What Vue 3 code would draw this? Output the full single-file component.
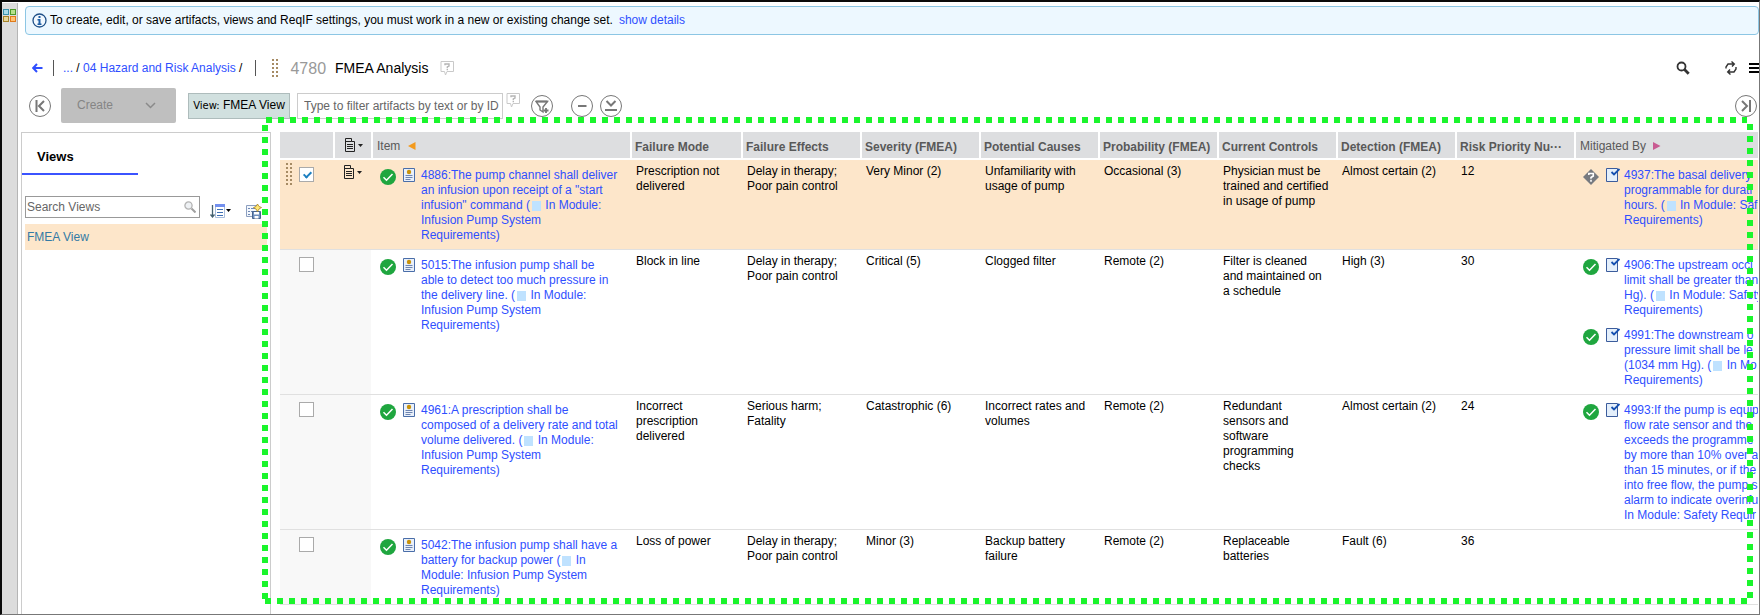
<script setup>
import { ref } from 'vue'

const filter = ref('')
const viewSearch = ref('')

const columns = [
  'Failure Mode',
  'Failure Effects',
  'Severity (FMEA)',
  'Potential Causes',
  'Probability (FMEA)',
  'Current Controls',
  'Detection (FMEA)',
  'Risk Priority Nu···',
]

// In link lines, "#" stands for the small module square.
const rows = ref([
  {
    id: 4886,
    selected: true,
    item: ['4886:The pump channel shall deliver', 'an infusion upon receipt of a "start', 'infusion" command (# In Module:', 'Infusion Pump System', 'Requirements)'],
    cells: ['Prescription not\ndelivered', 'Delay in therapy;\nPoor pain control', 'Very Minor (2)', 'Unfamiliarity with\nusage of pump', 'Occasional (3)', 'Physician must be\ntrained and certified\nin usage of pump', 'Almost certain (2)', '12'],
    links: [{ state: 'unknown', lines: ['4937:The basal delivery', 'programmable for durati', 'hours. (# In Module: Saf', 'Requirements)'] }],
  },
  {
    id: 5015,
    selected: false,
    item: ['5015:The infusion pump shall be', 'able to detect too much pressure in', 'the delivery line. (# In Module:', 'Infusion Pump System', 'Requirements)'],
    cells: ['Block in line', 'Delay in therapy;\nPoor pain control', 'Critical (5)', 'Clogged filter', 'Remote (2)', 'Filter is cleaned\nand maintained on\na schedule', 'High (3)', '30'],
    links: [
      { state: 'ok', lines: ['4906:The upstream occl', 'limit shall be greater than', 'Hg). (# In Module: Safety', 'Requirements)'] },
      { state: 'ok', lines: ['4991:The downstream o', 'pressure limit shall be le', '(1034 mm Hg). (# In Mo', 'Requirements)'] },
    ],
  },
  {
    id: 4961,
    selected: false,
    item: ['4961:A prescription shall be', 'composed of a delivery rate and total', 'volume delivered. (# In Module:', 'Infusion Pump System', 'Requirements)'],
    cells: ['Incorrect\nprescription\ndelivered', 'Serious harm;\nFatality', 'Catastrophic (6)', 'Incorrect rates and\nvolumes', 'Remote (2)', 'Redundant\nsensors and\nsoftware\nprogramming\nchecks', 'Almost certain (2)', '24'],
    links: [{ state: 'ok', lines: ['4993:If the pump is equip', 'flow rate sensor and the', 'exceeds the programme', 'by more than 10% over a', 'than 15 minutes, or if the', 'into free flow, the pump s', 'alarm to indicate overinfu', 'In Module: Safety Requir'] }],
  },
  {
    id: 5042,
    selected: false,
    item: ['5042:The infusion pump shall have a', 'battery for backup power (# In', 'Module: Infusion Pump System', 'Requirements)'],
    cells: ['Loss of power', 'Delay in therapy;\nPoor pain control', 'Minor (3)', 'Backup battery\nfailure', 'Remote (2)', 'Replaceable\nbatteries', 'Fault (6)', '36'],
    links: [],
  },
])
</script>

<template>
  <div class="page">
    <nav class="rail" aria-label="Dashboards">
      <button class="plain" aria-label="Open dashboards">
        <svg width="13" height="13" viewBox="0 0 13 13">
          <rect x=".5" y=".5" width="5" height="5" fill="#a8dbe8" stroke="#3a93ad" />
          <rect x="7.500" y=".5" width="5" height="5" fill="#b5e08a" stroke="#4c9a2a" />
          <rect x=".5" y="7.500" width="5" height="5" fill="#e6d596" stroke="#a5832a" />
          <rect x="7.500" y="7.500" width="5" height="5" fill="#ffc173" stroke="#e07a1a" />
        </svg>
      </button>
    </nav>

    <main class="main">
      <div class="banner">
        <svg width="15" height="15" viewBox="0 0 15 15">
          <circle cx="7.500" cy="7.500" r="6.500" fill="#f2f9ff" stroke="#1f5088" stroke-width="1.300" />
          <path d="M6.500 3h2v2h-2zM5.500 6h3v4.500h1V12h-4v-1.500h1V7.500h-1z" fill="#1f5fa5" />
        </svg>
        <span class="banner-text">To create, edit, or save artifacts, views and ReqIF settings, you must work in a new or existing change set.</span>
        <a href="#">show details</a>
      </div>

      <header class="crumbs">
        <a href="#" class="back" aria-label="Back">
          <svg width="11" height="10" viewBox="0 0 11 10"><path d="M10.500 5H1.500M5 1 1.200 5 5 9" fill="none" stroke="#2f4fff" stroke-width="2" /></svg>
        </a>
        <i class="bar"></i>
        <span class="trail"><a href="#">...</a> / <a href="#">04 Hazard and Risk Analysis</a> /</span>
        <i class="bar bar-end"></i>
        <svg class="grip" width="6" height="18" viewBox="0 0 6 18"><path d="M1 0v18M5 0v18" stroke="#a68b64" stroke-width="2" stroke-dasharray="2 2" /></svg>
        <span class="module-id">4780</span>
        <h1>FMEA Analysis</h1>
        <button class="plain" aria-label="Help">
          <svg width="15" height="15" viewBox="0 0 15 15"><path d="M1 .5h12.500v10H7L5.500 14 4.500 10.500H1z" fill="#fff" stroke="#c9c9c9" /><path d="M5 4.200V3h4v2L7.300 6v1.200M7.300 8v1.300" fill="none" stroke="#b5b5b5" stroke-width="1.400" /></svg>
        </button>
        <div class="tools">
          <button class="plain" aria-label="Search">
            <svg width="14" height="14" viewBox="0 0 14 14"><circle cx="5.500" cy="5.500" r="4" fill="none" stroke="#333" stroke-width="1.800" /><path d="m8.500 8.500 4.200 4.200" stroke="#333" stroke-width="2.800" /></svg>
          </button>
          <button class="plain refresh" aria-label="Refresh">
            <svg width="12" height="14" viewBox="0 0 12 14"><path d="M1 7.500V6l2-3h6M6.500.5 9.300 3 7 5.500M11 6v2l-2 3H3M5.500 13.500 2.700 11 5 8.500" fill="none" stroke="#333" stroke-width="1.400" /></svg>
          </button>
          <button class="plain" aria-label="Menu">
            <svg width="10" height="10" viewBox="0 0 10 10"><path d="M0 1h10M0 5h10M0 9h10" stroke="#000" stroke-width="2" /></svg>
          </button>
        </div>
      </header>

      <div class="toolbar">
        <button class="round" aria-label="Collapse left panel">
          <svg width="22" height="22" viewBox="0 0 22 22"><path d="M7.500 5v12M15 6l-5 5 5 5" fill="none" stroke="#777" stroke-width="2" /></svg>
        </button>
        <button class="create" disabled>Create
          <svg width="11" height="7" viewBox="0 0 11 7"><path d="m1 1 4.500 4.500L10 1" fill="none" stroke="#8a8a8a" stroke-width="1.500" /></svg>
        </button>
        <button class="view-pick"><small>View:</small> FMEA View</button>
        <input v-model="filter" class="filter" type="text" aria-label="Filter artifacts" placeholder="Type to filter artifacts by text or by ID" />
        <button class="plain help" aria-label="Filter help">
          <svg width="15" height="15" viewBox="0 0 15 15"><path d="M1 .5h12.500v10H7L5.500 14 4.500 10.500H1z" fill="#fff" stroke="#c9c9c9" /><path d="M5 4.200V3h4v2L7.300 6v1.200M7.300 8v1.300" fill="none" stroke="#b5b5b5" stroke-width="1.400" /></svg>
        </button>
        <button class="round add-filter" aria-label="Add filter">
          <svg width="22" height="22" viewBox="0 0 22 22"><path d="M5 6.500h11.500L12 12v5L9 15v-3z" fill="none" stroke="#777" stroke-width="1.400" /><path d="M5 6.500h11.500" stroke="#777" stroke-width="2" /><path d="M15 13v5M12.500 15.500h5" stroke="#777" stroke-width="1.800" /></svg>
        </button>
        <button class="round" aria-label="Collapse all">
          <svg width="22" height="22" viewBox="0 0 22 22"><path d="M7 11h8.500" stroke="#777" stroke-width="2" /></svg>
        </button>
        <button class="round expand" aria-label="Expand all">
          <svg width="22" height="22" viewBox="0 0 22 22"><path d="m6.500 6 4.500 4.500L15.500 6M5 15h12" fill="none" stroke="#777" stroke-width="2" /></svg>
        </button>
        <button class="round right" aria-label="Expand right panel">
          <svg width="22" height="22" viewBox="0 0 22 22"><path d="M15 5v12M7 6l5 5-5 5" fill="none" stroke="#777" stroke-width="2" /></svg>
        </button>
      </div>

      <div class="content">
        <aside class="views">
          <h2>Views</h2>
          <div class="search-row">
            <label class="search">
              <input v-model="viewSearch" type="text" aria-label="Search Views" placeholder="Search Views" />
              <svg width="12" height="12" viewBox="0 0 12 12"><circle cx="4.500" cy="4.500" r="3.600" fill="#eef1f4" stroke="#b3b3b3" stroke-width="1.300" /><path d="m7.500 7.500 4 4" stroke="#a0a0a0" stroke-width="2" /></svg>
            </label>
            <button class="plain sort" aria-label="Sort views">
              <svg width="21" height="14" viewBox="0 0 21 14"><path d="M2.500 1v12M.5 10.500l2 2.500 2-2.500" fill="none" stroke="#44606f" stroke-width="1.300" /><path d="M5.500.5h9v13h-9z" fill="#fff" stroke="#a9bddc" /><path d="M5 0h10v3H5z" fill="#7390ee" /><path d="M7 5.500h6M7 8.500h6M7 11.500h6" stroke="#3e6fb5" /><path d="M16 5h5l-2.500 3z" fill="#000" /></svg>
            </button>
            <button class="plain save" aria-label="Save view">
              <svg width="16" height="15" viewBox="0 0 16 15"><path d="M.5 1.500h11v11H.5z" fill="#f3f7fc" stroke="#8c9fc0" /><path d="M2 4.500h2M2 7.500h2M2 10.500h2M5 4.500h4M5 7.500h3" stroke="#6f88b5" /><path d="M6.500 7.500h8v7h-8z" fill="#6e8fbd" stroke="#48658f" /><path d="M8 8h5v2.500H8zM8.500 12h4v2.500h-4z" fill="#fff" /><path d="M11.500 0 13 2.500l2.500 1L13 5l-1.500 2.500L10 5 7.500 3.500l2.500-1z" fill="#ffe873" stroke="#a8821e" stroke-width=".8" /></svg>
            </button>
          </div>
          <a href="#" class="view-item">FMEA View</a>
        </aside>

        <div class="grid">
          <table>
            <colgroup>
              <col class="c-check" /><col class="c-menu" /><col class="c-item" /><col class="c-mode" />
              <col v-for="n in 7" :key="n" class="c-attr" /><col />
            </colgroup>
            <thead>
              <tr>
                <th></th>
                <th>
                  <button class="plain page-menu" aria-label="Bulk actions">
                    <svg width="19" height="15" viewBox="0 0 19 15"><path d="M.5.5h6v3h3v10h-9zM.5 3.500h6M2 6.500h6M2 8.500h6M2 10.500h6" fill="none" stroke="#222" /><path d="M13 6h5l-2.500 3z" fill="#222" /></svg>
                  </button>
                </th>
                <th class="light">Item <svg width="8" height="8" viewBox="0 0 8 8"><path d="M7.500 0v8L0 4z" fill="#f39a1d" /></svg></th>
                <th v-for="c in columns" :key="c" class="attr">{{ c }}</th>
                <th class="light">Mitigated By <svg width="8" height="8" viewBox="0 0 8 8"><path d="M0 0v8l7.500-4z" fill="#c95b92" /></svg></th>
              </tr>
            </thead>
            <tbody>
              <tr v-for="r in rows" :key="r.id" :class="{ selected: r.selected }">
                <td class="side">
                  <div class="pick">
                    <svg class="handle" width="6" height="22" viewBox="0 0 6 22"><path v-if="r.selected" d="M1 0v22M5 0v22" stroke="#a68b64" stroke-width="2" stroke-dasharray="2 2" /></svg>
                    <input v-model="r.selected" type="checkbox" :aria-label="'Select ' + r.id" />
                  </div>
                </td>
                <td class="side menu">
                  <button v-if="r.selected" class="plain page-menu" aria-label="Row actions">
                    <svg width="19" height="15" viewBox="0 0 19 15"><path d="M.5.5h6v3h3v10h-9zM.5 3.500h6M2 6.500h6M2 8.500h6M2 10.500h6" fill="none" stroke="#222" /><path d="M13 6h5l-2.500 3z" fill="#222" /></svg>
                  </button>
                </td>
                <td class="artifact-cell">
                  <div class="artifact">
                    <svg class="state" width="16" height="16" viewBox="0 0 16 16"><circle cx="8" cy="8" r="8" fill="#1fa63f" /><path d="m3.500 8.300 3 3 6-6.300" fill="none" stroke="#fff" stroke-width="1.500" /></svg>
                    <svg class="kind" width="14" height="14" viewBox="0 0 14 14"><path d="M.5.5h11v13H.5z" fill="#e9f0fa" stroke="#4a6ea9" /><circle cx="6" cy="4" r="2.200" fill="#c8920a" /><path d="M2.500 7.500h7M2.500 9.500h7M2.500 11.500h5" stroke="#6d84b0" /></svg>
                    <a href="#"><span v-for="(l, i) in r.item" :key="i" class="line"><template v-for="(p, k) in l.split('#')" :key="k"><i v-if="k" class="mod"></i>{{ p }}</template></span></a>
                  </div>
                </td>
                <td v-for="(c, i) in r.cells" :key="i" class="value">{{ c }}</td>
                <td class="artifact-cell">
                  <div v-for="(m, j) in r.links" :key="j" class="artifact">
                    <svg v-if="m.state === 'ok'" class="state" width="16" height="16" viewBox="0 0 16 16"><circle cx="8" cy="8" r="8" fill="#1fa63f" /><path d="m3.500 8.300 3 3 6-6.300" fill="none" stroke="#fff" stroke-width="1.500" /></svg>
                    <svg v-else class="state" width="16" height="16" viewBox="0 0 16 16"><path d="m8 0 8 8-8 8-8-8z" fill="#777a80" /><path d="M5.800 6V4.500h4.500V7L8 8.500v1.300M8 10.800v2" fill="none" stroke="#fff" stroke-width="1.600" /></svg>
                    <svg class="kind" width="14" height="14" viewBox="0 0 14 14"><path d="M.5.5h11v13H.5z" fill="#e4effb" stroke="#3b5c9c" /><path d="m5.500 4 2.500 2.500L13.500 1" fill="none" stroke="#1550b0" stroke-width="1.800" /></svg>
                    <a href="#"><span v-for="(l, i) in m.lines" :key="i" class="line"><template v-for="(p, k) in l.split('#')" :key="k"><i v-if="k" class="mod"></i>{{ p }}</template></span></a>
                  </div>
                </td>
              </tr>
            </tbody>
          </table>
        </div>
      </div>
    </main>
    <div class="highlight"></div>
  </div>
</template>

<style>
body {
  background: #fff;
}
</style>

<style scoped>
.page {
  position: relative;
  display: flex;
  box-sizing: border-box;
  min-height: 100vh;
  overflow: hidden;
  border: 1px solid #777;
  border-top: 2px solid #0a0a0a;
  border-left: 2px solid #0a0a0a;
  font: 12px/15px "Liberation Sans", Arial, sans-serif;
  color: #000;
}
button,
input {
  box-sizing: border-box;
  font: inherit;
  margin: 0;
}
a {
  color: #2f4fff;
  text-decoration: none;
}
svg {
  display: block;
  flex: none;
}
.plain {
  display: block;
  padding: 0;
  border: 0;
  background: none;
}
.rail {
  box-sizing: border-box;
  flex: none;
  width: 16px;
  margin-top: 1px;
  padding: 6px 1px;
  background: #dcdcdc;
  border-right: 1px solid #b5b5b5;
}
.main {
  flex: 1;
  min-width: 0;
  display: flex;
  flex-direction: column;
}
.banner {
  display: flex;
  align-items: center;
  box-sizing: border-box;
  height: 29px;
  margin: 4px 0 0 7px;
  padding: 0 6px 1px;
  border: 1px solid #8cc6e4;
  border-radius: 4px;
  background: #edf8ff;
  white-space: nowrap;
}
.banner-text {
  margin: 0 6px 0 3px;
}
.crumbs {
  display: flex;
  align-items: center;
  height: 36px;
  margin-top: 15px;
  padding-left: 14px;
  white-space: nowrap;
}
.bar {
  width: 1px;
  height: 16px;
  margin: 0 9px 0 10px;
  background: #555;
}
.bar-end {
  margin: 0 16px 0 13px;
}
.module-id {
  margin: 0 9px 0 12px;
  font-size: 16px;
  color: #999;
}
h1 {
  margin: 0 12px 0 0;
  font-size: 14px;
  font-weight: 400;
}
.tools {
  display: flex;
  align-items: center;
  margin-left: auto;
}
.refresh {
  margin: 0 12px 0 35px;
}
.toolbar {
  display: flex;
  align-items: center;
  height: 35px;
  margin: 2px 2px 0 11px;
}
.round {
  flex: none;
  width: 22px;
  height: 22px;
  padding: 0;
  border: 1px solid #777;
  border-radius: 50%;
  background: #fff;
}
.round svg {
  margin: -1px;
}
.create {
  display: flex;
  align-items: center;
  justify-content: space-between;
  width: 115px;
  height: 35px;
  margin: 0 12px 0 10px;
  padding: 0 20px 0 16px;
  border: 0;
  border-radius: 2px;
  background: #bfbfbf;
  color: #858585;
}
.view-pick {
  width: 102px;
  height: 26px;
  padding: 0;
  border: 1px solid #aebcbc;
  background: #d1e0df;
  color: #000;
  white-space: nowrap;
}
.view-pick small {
  font: 10px/15px "DejaVu Sans", sans-serif;
}
.filter {
  width: 206px;
  height: 26px;
  margin: 0 3px 0 7px;
  padding: 0 0 0 6px;
  border: 1px solid #ccc;
  background: #fff;
}
.filter::placeholder,
.search input::placeholder {
  color: #666;
  opacity: 1;
}
.help {
  align-self: flex-start;
  margin-top: 5px;
}
.add-filter {
  margin: 0 18px 0 10px;
}
.expand {
  margin-left: 7px;
}
.right {
  margin-left: auto;
}
.content {
  flex: 1;
  display: flex;
  margin-top: 9px;
}
.views {
  box-sizing: border-box;
  flex: none;
  width: 250px;
  margin-left: 3px;
  border: 1px solid #ccc;
  border-bottom: 0;
}
h2 {
  width: 101px;
  margin: 0 0 21px;
  padding: 16px 0 9px 15px;
  border-bottom: 2px solid #3b53ff;
  font-size: 13px;
  line-height: 15px;
}
.search-row {
  display: flex;
  align-items: flex-start;
  margin: 0 9px 0 3px;
}
.search {
  display: flex;
  align-items: center;
  box-sizing: border-box;
  width: 175px;
  height: 22px;
  padding-right: 3px;
  border: 1px solid #999;
}
.search input {
  flex: 1;
  min-width: 0;
  padding: 0 1px;
  border: 0;
}
.sort {
  margin: 8px 15px 0 10px;
}
.save {
  margin: 8px -3px 0 0;
}
.view-item {
  display: block;
  margin: 5px 3px 0;
  padding: 6px 2px 5px;
  background: #fde6ca;
  color: #337aa5;
}
.grid {
  flex: 1;
  min-width: 0;
  margin: 0 1px 0 9px;
  overflow: hidden;
}
table {
  width: 100%;
  table-layout: fixed;
  border-collapse: separate;
  border-spacing: 0;
}
.c-check { width: 55px; }
.c-menu { width: 38px; }
.c-item { width: 259px; }
.c-mode { width: 111px; }
.c-attr { width: 119px; }
th {
  box-sizing: border-box;
  height: 28px;
  padding: 0 0 0 3px;
  border-right: 2px solid #fff;
  border-bottom: 2px solid #fff;
  background: #dddee0;
  color: #595959;
  text-align: left;
  white-space: nowrap;
}
th.attr {
  padding-top: 4px;
}
th:last-child {
  border-right: 0;
}
th.light {
  padding-top: 2px;
  padding-left: 4px;
  font-weight: 400;
}
th svg {
  display: inline-block;
  margin-left: 4px;
}
th .page-menu {
  margin-left: 7px;
}
th .page-menu svg {
  display: block;
  margin: 0;
}
td {
  padding: 0;
  border-bottom: 1px solid #e0e0e0;
  vertical-align: top;
}
.side {
  background: #f8f8f8;
}
td.side.menu {
  background: linear-gradient(#f8f8f8, #f8f8f8) 0 0 / 36px 100% no-repeat;
}
.selected td.side,
.selected td {
  background: #fde6ca;
}
.pick {
  display: flex;
  gap: 7px;
  padding: 3px 0 0 6px;
}
.pick input {
  position: relative;
  appearance: none;
  width: 15px;
  height: 15px;
  margin-top: 4px;
  border: 1px solid #aaa;
  background: #fff;
}
.pick input:checked::after {
  content: "";
  position: absolute;
  top: 2px;
  left: 5px;
  width: 3px;
  height: 6px;
  border: solid #1c7fc0;
  border-width: 0 2px 2px 0;
  transform: rotate(45deg);
}
.menu .page-menu {
  margin: 5px 0 0 9px;
}
.artifact-cell {
  padding: 8px 0 6px 7px;
  overflow: hidden;
}
.artifact {
  display: flex;
  align-items: flex-start;
}
.artifact + .artifact {
  margin-top: 10px;
}
.state {
  margin-top: 1px;
}
.kind {
  margin: 0 4px 0 7px;
}
.line {
  display: block;
  white-space: pre;
}
.mod {
  display: inline-block;
  width: 9px;
  height: 10px;
  margin: 0 1px 0 2px;
  background: #bfe2ff;
  vertical-align: -2px;
}
.value {
  padding: 4px 0 0 4px;
  white-space: pre;
}
.highlight {
  --dash: #1af52c 0 6px, transparent 6px 12px;
  position: absolute;
  top: 115px;
  right: 6px;
  bottom: 10px;
  left: 260px;
  pointer-events: none;
  background:
    repeating-linear-gradient(90deg, var(--dash)) 4px 0 / calc(100% - 10px) 6px no-repeat,
    repeating-linear-gradient(90deg, var(--dash)) 3px 100% / calc(100% - 9px) 6px no-repeat,
    repeating-linear-gradient(180deg, var(--dash)) 0 8px / 6px calc(100% - 13px) no-repeat,
    repeating-linear-gradient(180deg, var(--dash)) 100% 7px / 6px calc(100% - 13px) no-repeat;
}
</style>
